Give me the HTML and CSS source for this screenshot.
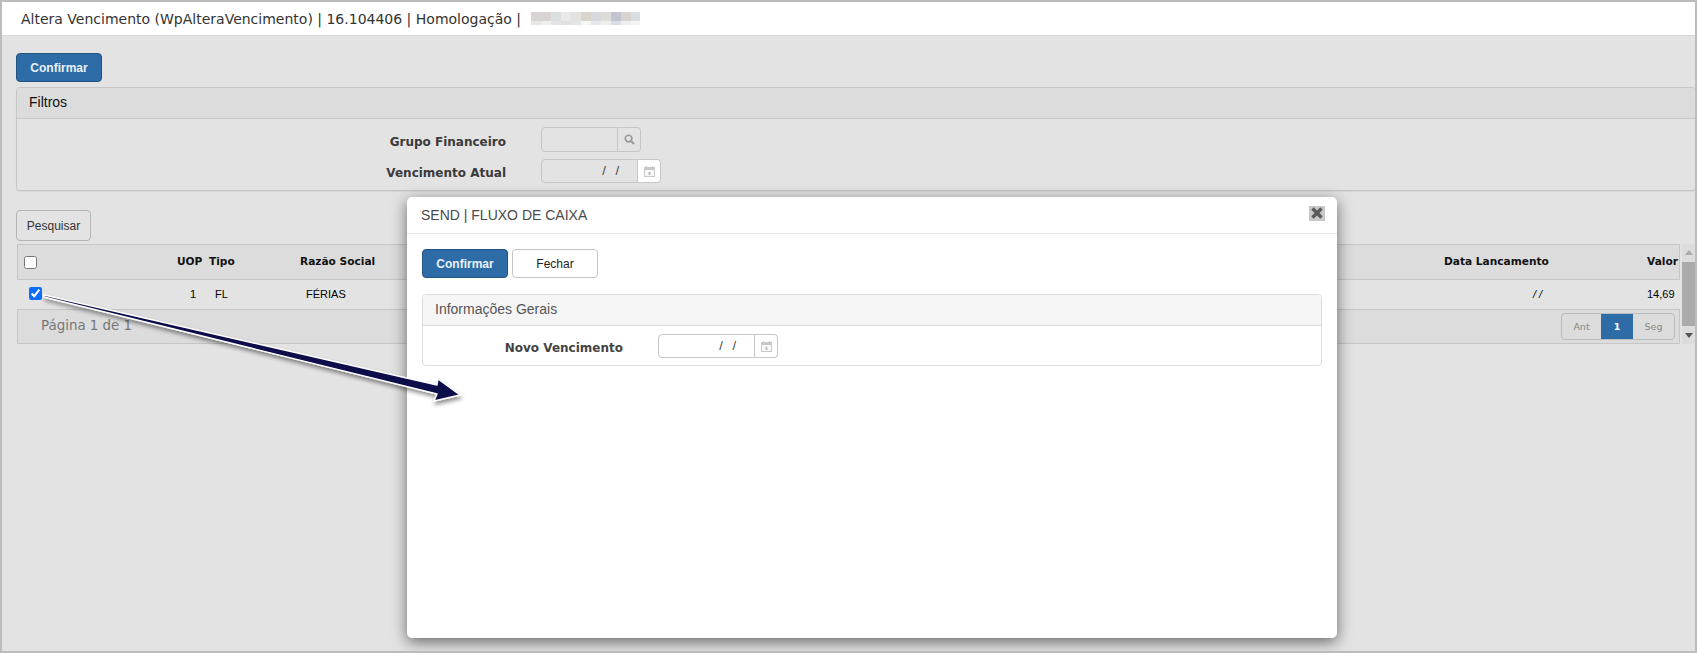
FILE: index.html
```html
<!DOCTYPE html>
<html lang="pt">
<head>
<meta charset="utf-8">
<title>Altera Vencimento</title>
<link rel="stylesheet" href="styles.css">
</head>
<body>
<div class="frame">
  <header class="topbar">
    <span class="title">Altera Vencimento (WpAlteraVencimento) | 16.104406 | Homologação |</span>
    <span class="redact"></span>
  </header>
  <main class="content">
    <button class="btn primary">Confirmar</button>
    <section class="panel filters">
      <div class="panel-head">Filtros</div>
      <div class="form">
        <div class="row">
          <label class="label">Grupo Financeiro</label>
          <div class="field"><span class="input w76"></span><span class="addon search">
            <svg width="11" height="11" viewBox="0 0 12 12"><circle cx="5" cy="5" r="3.6" fill="none" stroke="#9a9a9a" stroke-width="1.8"/><path d="M7.6 7.6 11 11" stroke="#9a9a9a" stroke-width="2.2"/></svg>
          </span></div>
        </div>
        <div class="row">
          <label class="label">Vencimento Atual</label>
          <div class="field"><span class="input w96 date">/ /</span><span class="addon cal white">
            <svg width="11" height="11" viewBox="0 0 11 11"><rect x=".5" y="1.5" width="10" height="9" fill="#f7f7f7" stroke="#c8c8c8"/><rect x="1" y="2" width="9" height="2" fill="#c8c8c8"/><rect x="2" y="0" width="1" height="2" fill="#c8c8c8"/><rect x="8" y="0" width="1" height="2" fill="#c8c8c8"/><rect x="4.5" y="6" width="2" height="3" fill="#bdbdbd"/></svg>
          </span></div>
        </div>
      </div>
    </section>
    <button class="btn plain">Pesquisar</button>
    <div class="grid-wrap">
      <div class="grid">
        <div class="cells head">
          <span class="c-check"><input type="checkbox" class="chk"></span>
          <span class="c-uop">UOP</span>
          <span class="c-tipo">Tipo</span>
          <span class="c-razao">Razão Social</span>
          <span class="c-data">Data Lancamento</span>
          <span class="c-valor">Valor</span>
        </div>
        <div class="cells body">
          <span class="c-check"><input type="checkbox" class="chk on" checked></span>
          <span class="c-uop">1</span>
          <span class="c-tipo">FL</span>
          <span class="c-razao">FÉRIAS</span>
          <span class="c-data">/ /</span>
          <span class="c-valor">14,69</span>
        </div>
        <div class="foot">
          <span class="page-info">Página 1 de 1</span>
          <div class="pager"><span class="pg">Ant</span><span class="pg active">1</span><span class="pg">Seg</span></div>
        </div>
      </div>
      <div class="scrollbar">
        <span class="arrow-up"></span>
        <span class="thumb"></span>
        <span class="arrow-down"></span>
      </div>
    </div>
  </main>

  <div class="modal">
    <div class="modal-head">
      <span>SEND | FLUXO DE CAIXA</span>
      <span class="close"><svg width="12" height="12" viewBox="0 0 12 12"><path d="M1.5 1.5 10.5 10.5M10.5 1.5 1.5 10.5" stroke="#5a5a5a" stroke-width="3.4"/></svg></span>
    </div>
    <div class="modal-body">
      <div class="actions">
        <button class="btn primary">Confirmar</button>
        <button class="btn light">Fechar</button>
      </div>
      <section class="panel general">
        <div class="panel-head">Informações Gerais</div>
        <div class="row modal-row">
          <label class="label">Novo Vencimento</label>
          <div class="field"><span class="input w97 date">/ /</span><span class="addon cal">
            <svg width="11" height="11" viewBox="0 0 11 11"><rect x=".5" y="1.5" width="10" height="9" fill="#f7f7f7" stroke="#c8c8c8"/><rect x="1" y="2" width="9" height="2" fill="#c8c8c8"/><rect x="2" y="0" width="1" height="2" fill="#c8c8c8"/><rect x="8" y="0" width="1" height="2" fill="#c8c8c8"/><rect x="4.5" y="6" width="2" height="3" fill="#bdbdbd"/></svg>
          </span></div>
        </div>
      </section>
    </div>
  </div>

  <svg class="annotation" width="500" height="130" viewBox="0 0 500 130">
    <defs><filter id="sh" x="-5%" y="-20%" width="110%" height="150%"><feDropShadow dx="1" dy="3" stdDeviation="2" flood-color="#000" flood-opacity=".45"/></filter></defs>
    <path d="M0 0 L393 90 L394 84 L416 100 L390 106 L393 99 L0 2 Z" fill="#0a0a4a" stroke="#fff" stroke-width="1.4" stroke-linejoin="round" filter="url(#sh)"/>
  </svg>
</div>
</body>
</html>
```
FILE: styles.css
```css
*{box-sizing:border-box}
html,body{margin:0;height:100%}
body{background:#fff;overflow:hidden;font-family:"Liberation Sans",Arial,sans-serif}
.frame{position:relative;width:1697px;height:653px;background:#e3e3e3;border:2px solid #bcbcbc;overflow:hidden}
.topbar{height:34px;background:#fff;display:flex;align-items:center;padding-left:19px;gap:10px;border-bottom:1px solid #d8d8d8}
.title{font:14px "DejaVu Sans",Verdana,sans-serif;color:#333}
.redact{display:block;height:13px;width:109px;background:
  linear-gradient(90deg,#d8d4d4 0 20px,#dcdfe2 20px 30px,#e9e9e9 30px 40px,#e2e2df 40px 50px,#d9d4cc 50px 60px,#d6dade 60px 70px,#dedcd8 70px 80px,#c2c5cf 80px 90px,#d7d4d1 90px 100px,#d8dde1 100px 110px) top/100% 9px no-repeat,
  linear-gradient(90deg,#e8e6e4 0 10px,#eeeeec 10px 20px,#e4e4e6 20px 30px,#e0e0e0 30px 40px,#e4e5e8 40px 50px,#f7f5f2 50px 60px,#e5e8ea 60px 70px,#f0eeec 70px 80px,#dcdde4 80px 90px,#eeeeee 90px 100px,#f4f4f4 100px 110px) bottom/100% 4px no-repeat}
.content{padding:17px 0 0 14px;display:flex;flex-direction:column;align-items:flex-start}
.btn{font:bold 12px "Liberation Sans",Arial,sans-serif;border-radius:4px;cursor:default;padding:0}
.primary{width:86px;height:29px;background:#2d6ca7;border:1px solid #24537f;color:#e9f0f7}
.plain{width:75px;height:31px;background:#e3e3e3;border:1px solid #b4b4b4;color:#333;font-weight:normal;margin-top:19px}
.light{width:86px;height:29px;background:#fff;border:1px solid #c4c4c4;color:#222;font-weight:normal}
.panel{border:1px solid #cfcfcf;border-radius:4px}
.filters{width:1680px;height:104px;margin-top:5px;border-color:#c6c6c6;box-shadow:0 1px 1px #d5d5d5}
.panel-head{background:#dcdcdc;border-bottom:1px solid #c6c6c6;height:31px;padding-left:12px;font-size:14px;line-height:28px;color:#111;border-radius:3px 3px 0 0}
.form{padding-top:8px;display:flex;flex-direction:column;gap:7px}
.row{display:flex;align-items:center}
.label{width:489px;text-align:right;padding-top:4px;font:bold 12px "DejaVu Sans",Verdana,sans-serif;color:#3a3a3a}
.field{display:flex;margin-left:35px}
.input{display:block;height:25px;border:1px solid #c6c6c6;border-radius:4px 0 0 4px;background:#e3e3e3;font:13px "Liberation Sans",Arial,sans-serif;color:#444}
.w76{width:77px}
.w96{width:97px;height:24px}
.w97{width:97px;height:24px;background:#fff}
.date{text-align:right;padding-right:18px;line-height:22px;word-spacing:6px}
.addon{display:flex;align-items:center;justify-content:center;border:1px solid #c6c6c6;border-left:0;border-radius:0 4px 4px 0;width:23px;height:24px}
.search{height:25px;background:#e3e3e3}
.white{background:#fff}
.grid-wrap{display:flex;margin-top:3px;gap:2px;margin-left:1px;font-size:11px;position:relative}
.grid{flex:0 0 1663px}
.cells{position:relative;display:block;height:29px;border-bottom:1px solid #c6c6c6}
.cells span{position:absolute;top:0;white-space:nowrap;line-height:28px}
.head{height:36px;background:#dcdcdc;border:1px solid #c6c6c6;font:bold 10.6px "DejaVu Sans",Verdana,sans-serif;color:#111}
.head span{line-height:33px}
.body{height:30px;color:#000;font-size:11px}
.chk{margin:0;width:13px;height:13px;display:block;accent-color:#0d6efd}
.head .c-check{left:6px;top:11px;line-height:0}
.body .c-check{left:12px;top:7px;line-height:0}
.head .c-uop{left:159px}.head .c-tipo{left:191px}.head .c-razao{left:282px}
.body .c-uop{left:173px}.body .c-tipo{left:198px}.body .c-razao{left:289px}
.head .c-data{left:1426px}.head .c-valor{right:1px}
.body .c-data{left:1516px;font-style:italic}.body .c-valor{left:1630px}
.foot{height:34px;background:#dcdcdc;border:1px solid #c6c6c6;border-top:0;display:flex;align-items:center;justify-content:space-between;padding:0 4px 0 23px}
.page-info{font:13.4px "DejaVu Sans",Verdana,sans-serif;color:#777;position:relative;top:-1px}
.pager{display:flex;height:27px;border:1px solid #bcbcbc;border-radius:4px;overflow:hidden;font:9.5px "DejaVu Sans",Verdana,sans-serif;color:#888}
.pg{display:flex;align-items:center;justify-content:center;width:39px}
.pg:last-child{width:41px}
.pg.active{width:32px;background:#2d6ca7;color:#fff;font-weight:bold}
.scrollbar{width:13px;height:100px;background:#dcdcdc;display:flex;flex-direction:column;align-items:center;justify-content:space-between;padding:6px 0}
.thumb{width:13px;height:64px;background:#ababab}
.arrow-up{border:4px solid transparent;border-top:0;border-bottom:5px solid #a9a9a9}
.arrow-down{border:4px solid transparent;border-bottom:0;border-top:5px solid #555}
.modal{position:absolute;left:405px;top:195px;width:930px;height:441px;background:#fff;border-radius:5px;box-shadow:0 4px 15px rgba(0,0,0,.55)}
.modal-head{height:37px;border-bottom:1px solid #e8e8e8;display:flex;align-items:center;justify-content:space-between;padding:0 12px 0 14px;font-size:14px;color:#4a4a4a}
.close{width:16px;height:15px;background:#c8c8c8;display:flex;align-items:center;justify-content:center;margin-top:-4px}
.modal-body{padding:15px}
.actions{display:flex;gap:4px}
.general{width:900px;height:72px;margin-top:16px;border-color:#ddd}
.general .panel-head{background:#f5f5f5;border-bottom-color:#ddd;color:#555}
.modal-row{height:40px}
.modal-row .label{width:200px;color:#444}
.annotation{position:absolute;left:42px;top:293px;pointer-events:none;overflow:visible}
```
